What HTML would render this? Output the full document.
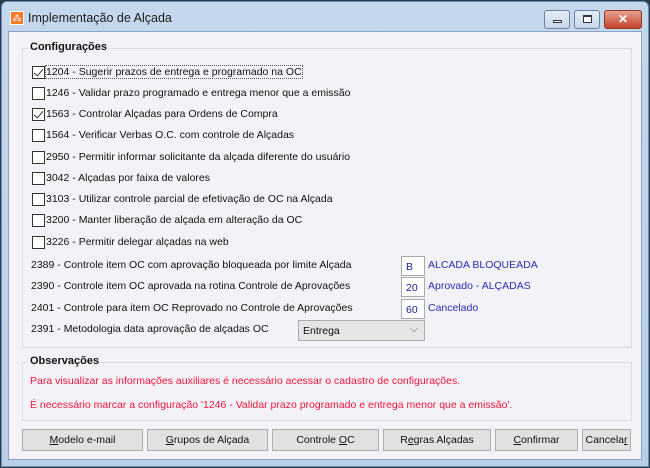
<!DOCTYPE html>
<html><head><meta charset="utf-8"><style>
*{margin:0;padding:0;box-sizing:border-box}
body{width:650px;height:468px;background:#2b3a48;font-family:"Liberation Sans",sans-serif;font-size:10.5px;color:#111;position:relative;overflow:hidden}
.win{position:absolute;left:1px;top:1px;width:648px;height:466px;background:linear-gradient(#c4d7ec,#b9cfe8);border:1px solid #6d8fb5;border-radius:6px 6px 0 0}
.title{position:absolute;left:26px;top:9px;font-size:12.5px;color:#1e1e1e}
.icon{position:absolute;left:8px;top:9px;width:14px;height:14px;background:#f47b2a;border:1px solid #fff;color:#fff;font-size:9px;line-height:12px;text-align:center}
.tb{position:absolute;top:8px;height:19px;border:1px solid #6b84a3;border-radius:3px;background:linear-gradient(#e4edf7,#c5d6ea)}
.client{position:absolute;left:8px;top:31px;width:634px;height:429px;background:#f3f3f7;border:1px solid #8aa4c3}
.a{position:absolute;white-space:nowrap}
.grp{position:absolute;border:1px solid #dcdcdc}
.cb{position:absolute;width:13px;height:13px;border:1px solid #333;background:#fff}
.cb.c::after{content:"";position:absolute;left:3px;top:0px;width:4px;height:8px;border:solid #333;border-width:0 1.5px 1.5px 0;transform:rotate(40deg)}
.inp{position:absolute;width:24px;height:20px;background:#fff;border:1px solid #aaa;color:#1a1aa0;padding:4px 0 0 4px}
.blue{color:#2a2ab8}
.red{color:#f0143c}
.btn{position:absolute;top:429px;height:22px;background:#e1e1e1;border:1px solid #adadad;text-align:center;line-height:20px}
</style></head><body>
<div class="win">
<div class="icon">⁂</div>
<div class="title">Implementação de Alçada</div>
<div class="tb" style="left:542px;width:26px"><div style="position:absolute;left:8px;top:9px;width:9px;height:3px;border:1px solid #334;background:#fff"></div></div>
<div class="tb" style="left:572px;width:26px"><div style="position:absolute;left:8px;top:4px;width:9px;height:8px;border:1px solid #334;border-top-width:2px;background:#fff"></div></div>
<div class="tb" style="left:602px;width:38px;background:linear-gradient(#e6a08f,#c4432c);border-color:#8a3a2a;color:#fff;text-align:center;font-weight:bold;line-height:17px;font-size:12px">✕</div>
</div>
<div class="client"></div>
<div class="grp" style="left:22px;top:48px;width:610px;height:300px"></div>
<div class="a" style="left:28px;top:41px;font-weight:bold;background:#f3f3f7;padding:0 2px;font-size:11px">Configurações</div>
<div class="cb c" style="left:32px;top:66px"></div><div class="a" style="left:46px;top:66px;outline:1px dotted #555">1204 - Sugerir prazos de entrega e programado na OC</div>
<div class="cb" style="left:32px;top:87px"></div><div class="a" style="left:46px;top:87px">1246 - Validar prazo programado e entrega menor que a emissão</div>
<div class="cb c" style="left:32px;top:108px"></div><div class="a" style="left:46px;top:108px">1563 - Controlar Alçadas para Ordens de Compra</div>
<div class="cb" style="left:32px;top:129px"></div><div class="a" style="left:46px;top:129px">1564 - Verificar Verbas O.C. com controle de Alçadas</div>
<div class="cb" style="left:32px;top:151px"></div><div class="a" style="left:46px;top:151px">2950 - Permitir informar solicitante da alçada diferente do usuário</div>
<div class="cb" style="left:32px;top:172px"></div><div class="a" style="left:46px;top:172px">3042 - Alçadas por faixa de valores</div>
<div class="cb" style="left:32px;top:193px"></div><div class="a" style="left:46px;top:193px">3103 - Utilizar controle parcial de efetivação de OC na Alçada</div>
<div class="cb" style="left:32px;top:214px"></div><div class="a" style="left:46px;top:214px">3200 - Manter liberação de alçada em alteração da OC</div>
<div class="cb" style="left:32px;top:236px"></div><div class="a" style="left:46px;top:236px">3226 - Permitir delegar alçadas na web</div>
<div class="a" style="left:31px;top:259px">2389 - Controle item OC com aprovação bloqueada por limite Alçada</div>
<div class="inp" style="left:401px;top:256px">B</div><div class="a blue" style="left:428px;top:259px">ALCADA BLOQUEADA</div>
<div class="a" style="left:31px;top:280px">2390 - Controle item OC aprovada na rotina Controle de Aprovações</div>
<div class="inp" style="left:401px;top:277px">20</div><div class="a blue" style="left:428px;top:280px">Aprovado - ALÇADAS</div>
<div class="a" style="left:31px;top:302px">2401 - Controle para item OC Reprovado no Controle de Aprovações</div>
<div class="inp" style="left:401px;top:299px">60</div><div class="a blue" style="left:428px;top:302px">Cancelado</div>
<div class="a" style="left:31px;top:323px">2391 - Metodologia data aprovação de alçadas OC</div>
<div class="a" style="left:298px;top:320px;width:127px;height:21px;background:#e5e5e5;border:1px solid #adadad;padding:4px 0 0 4px">Entrega<span style="position:absolute;right:6px;top:2px;color:#666">⌵</span></div>
<div class="grp" style="left:22px;top:362px;width:610px;height:59px"></div>
<div class="a" style="left:28px;top:355px;font-weight:bold;background:#f3f3f7;padding:0 2px;font-size:11px">Observações</div>
<div class="a red" style="left:30px;top:375px">Para visualizar as informações auxiliares é necessário acessar o cadastro de configurações.</div>
<div class="a red" style="left:30px;top:399px">É necessário marcar a configuração '1246 - Validar prazo programado e entrega menor que a emissão'.</div>
<div class="btn" style="left:22px;width:121px"><u>M</u>odelo e-mail</div>
<div class="btn" style="left:147px;width:121px"><u>G</u>rupos de Alçada</div>
<div class="btn" style="left:272px;width:107px">Controle <u>O</u>C</div>
<div class="btn" style="left:383px;width:108px">R<u>e</u>gras Alçadas</div>
<div class="btn" style="left:495px;width:83px"><u>C</u>onfirmar</div>
<div class="btn" style="left:582px;width:49px">Cancela<u>r</u></div>
</body></html>
